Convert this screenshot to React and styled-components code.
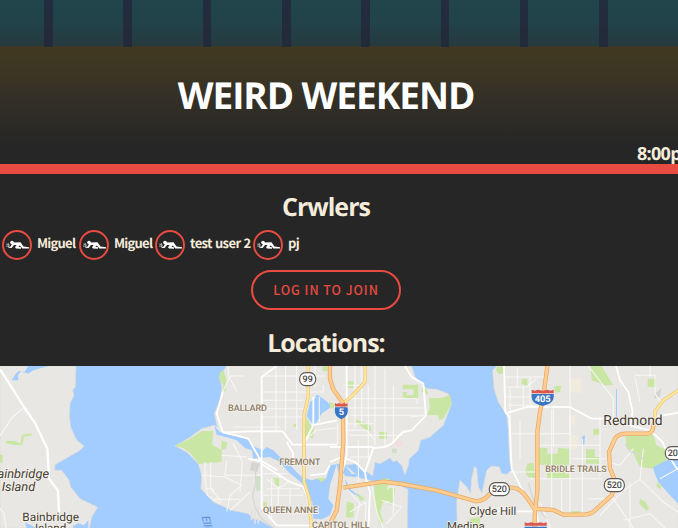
import React from "react";
import styled, { createGlobalStyle } from "styled-components";

const cream = "#f5ecdb";
const red = "#e84b41";
const display = `"Open Sans", "Noto Sans", sans-serif`;
const body = `"Noto Sans CJK SC", "Open Sans", sans-serif`;

const GlobalStyle = createGlobalStyle`
  * { box-sizing: border-box; }
  body { margin: 0; background: #262626; overflow: hidden; }
`;

const Page = styled.div`
  width: 678px;
  height: 528px;
  overflow: hidden;
  display: flex;
  flex-direction: column;
  background: #262626;
  color: ${cream};
  font-family: ${body};
  text-rendering: geometricPrecision;
`;

const Hero = styled.header`
  height: 174px;
  flex: none;
  border-bottom: 10px solid ${red};
  display: flex;
  flex-direction: column;
  overflow: hidden;
  background: linear-gradient(#413821 46px, #403822 58px, #353126 94px, #262626 146px);
`;

const Facade = styled.div`
  height: 46px;
  flex: none;
  display: flex;
  gap: 70.8px;
  padding-left: 44.2px;
  background: linear-gradient(#20454a, #21434a 45%, #253a3f);
`;

const Pillar = styled.div`
  flex: none;
  width: 8.5px;
  height: 47px;
  background: linear-gradient(#232d41, #232a38);
`;

const Title = styled.h1`
  margin: 0;
  width: 652px;
  height: 99px;
  text-align: center;
  white-space: nowrap;
  color: #fff;
  font: 700 37px/98px ${display};
  letter-spacing: -1.05px;
`;

const Time = styled.div`
  flex: none;
  height: 20px;
  padding-left: 637px;
  white-space: nowrap;
  font: 700 18px/20px ${display};
  letter-spacing: -0.7px;
`;

const Content = styled.main`
  width: 652px;
  height: 192px;
  flex: none;
  display: flex;
  flex-direction: column;
  align-items: center;
`;

const Heading = styled.h2`
  margin: 17px 0 0;
  height: 32px;
  font: 700 25px/32px ${display};
  letter-spacing: -1px;
`;

const Crawlers = styled.div`
  align-self: stretch;
  display: flex;
  height: 30px;
  margin-top: 7px;
  padding-left: 2px;
`;

const Crawler = styled.div`
  display: flex;
  flex: none;
  width: ${(p) => p.$width}px;
  white-space: nowrap;
  font-size: 13px;
  line-height: 26px;
  font-weight: 700;
  letter-spacing: ${(p) => p.$tracking}px;
  word-spacing: 0.6px;
`;

const Avatar = styled.span`
  width: 30px;
  height: 30px;
  flex: none;
  margin-right: 5px;
  border: 2px solid ${red};
  border-radius: 50%;
`;

const JoinButton = styled.button`
  margin-top: 10px;
  width: 150px;
  height: 40px;
  flex: none;
  padding: 0;
  border: 2px solid ${red};
  border-radius: 20px;
  background: transparent;
  color: ${red};
  font: 500 12.5px/36px ${body};
  letter-spacing: 0.95px;
`;

const MapCanvas = styled.svg`
  display: block;
  flex: none;
  width: 678px;
  height: 162px;
  font-family: Roboto, sans-serif;
`;

const Outlined = styled.text`
  font-size: ${(p) => p.$size}px;
  font-weight: ${(p) => p.$weight || 400};
  font-style: ${(p) => (p.$italic ? "italic" : "normal")};
  fill: ${(p) => p.$color || "#463d30"};
  stroke: #f5f3ef;
  stroke-width: 5px;
  stroke-linejoin: round;
  paint-order: stroke;
`;

const crawlers = [
  { name: "Miguel", width: 77, tracking: -0.75 },
  { name: "Miguel", width: 76, tracking: -0.75 },
  { name: "test user 2", width: 98, tracking: -0.6 },
  { name: "pj", width: 50, tracking: -0.5 },
];

function CrawlIcon() {
  return (
    <svg width="26" height="26" viewBox="0 0 26 26" display="block">
      <circle cx="8" cy="10.6" r="1.8" fill="#fff" />
      <path d="M9 10.4 L16.5 10.2 L19.5 14.6 L25 15.3 L25 16.6 L18.4 16.4 L15.8 13.6 L14.3 14.8 L17 15.3 L17 16.7 L12 16.5 L11 15.2 L12.6 12.9 L10 13 L7.6 16 L4.4 15.8 L4.4 15 L6.6 14.5 L7.9 12.2 Z" fill="#fff" />
      <path d="M2.3 12 L5.2 13 L4.3 15 M2 14.1 H5 M4 11 L5 13" fill="none" stroke="#bbb" strokeWidth=".9" />
    </svg>
  );
}

// Map drawing units are a third of a pixel.
const minorRoads = [
  "M0 440 L12 455 18 498 M70 138 L35 168 0 222",
  "M685 12 V40 L710 87 M735 42 H690 L668 90 M615 300 V350 L622 400 660 425 M632 300 V380 L665 420 M615 380 L635 380 645 395",
  "M828 12 V205 M857 12 V205 M890 12 V205 M785 42 H975 M785 90 H970 M785 115 H910 M785 140 H910 M785 165 H910 M700 195 H840",
  "M945 12 V75 M958 105 V180 M970 70 V95 M1013 185 V245 M910 240 L948 205 1010 198",
  "M700 245 L727 300 720 390 M680 298 L675 340 H785 M665 280 L740 285 M605 340 L675 345 725 370 L690 400 L680 448 M645 412 H720 M690 445 L750 390",
  "M790 335 H865 M800 350 L835 380 865 360 M800 380 H900 M815 350 V470 M835 375 V450 M870 380 V430 M790 400 H910 M840 335 V375",
  "M1065 12 V200 M1085 15 V185 M1105 70 V290 M1125 12 V250 M1155 20 V255 M1180 70 V240 M1030 70 H1090 M1040 110 H1250 M1040 138 H1270 M1050 160 H1278 M1045 185 H1120 M1050 220 H1210 M1050 285 H1110 M1075 235 V360",
  "M1036 205 H1100 L1125 235 M1230 165 L1278 160 M1252 110 V125 M1040 380 L1080 425 1060 498 M1050 450 L1098 420 1095 498 M1115 360 L1130 450 1150 498 M1180 375 V465 M1145 415 L1205 435 1160 485",
  "M1515 45 H1640 M1520 75 H1580 L1610 50 M1515 105 H1650 M1525 130 H1630 M1530 75 V210 M1552 20 V75 M1570 70 V145 M1590 45 V130 M1640 12 V140 M1710 12 V220 M1660 140 V255",
  "M1530 215 H1715 M1560 175 V290 M1615 250 H1800 M1655 140 V445 M1710 160 V455 M1747 230 V450 M1765 12 L1840 110 V165 M1800 165 V345 M1590 350 H1805 M1530 330 L1605 330 M1715 290 H1820 M1685 350 V455",
  "M1905 40 H1965 V95 L1985 125 M1905 45 L1920 120 M1950 12 V45 M1800 460 L1870 385 1920 352 L1930 260 M1920 352 L1990 420 2034 450 M1765 410 L1840 410 1900 498 M1870 475 L1950 455 1995 498 M1890 360 V498 M1535 440 H1470 M1620 420 L1650 498 M1900 260 L1860 310 1820 300 M1980 350 L2034 320",
];

const majorRoads = [
  "M830 12 L785 45 V438 M668 90 L650 155 668 210 L715 222 745 230 790 310 L870 360 910 375 925 410 935 498 M668 212 L745 208 H848 L878 248 H1012",
  "M1040 12 V280 L1027 330 M940 105 V190 L910 248 M935 190 L1012 175 M1215 12 L1235 45 1270 65 1278 160 L1235 205 1208 210 1175 245 1155 255 1120 258 1095 330 1098 350 1110 390 1105 498 M990 255 H1120",
  "M745 290 L790 300 L832 325 M860 240 L880 275 875 300 M785 438 L830 490 H930",
  "M990 300 L1025 285 1065 300 1095 330 M930 340 L975 335 990 310",
  "M1512 12 L1516 150 1528 165 1535 320 1565 380 1605 440 M1516 155 L1580 135 H1710 L1775 170 H1850 M1605 440 L1620 498",
  "M1848 12 L1860 55 1885 90 1898 150 1890 190 1950 205 1988 240 2005 280 2034 325 M1965 165 L2034 152 M1605 448 H1470",
];

const highways = [
  "M990 12 V50 L1000 82 1028 122 1030 240 1020 370 1010 445 990 485 970 505",
  "M1030 377 L1090 368 1150 359 1205 366 1310 385 1425 417 Q1450 420 1470 395 L1490 377 H1535 C1565 378 1580 405 1603 440 L1660 444 1690 458 H1750 Q1770 458 1785 445 L1835 400 1847 360 1830 320 1827 270 1845 230 Q1855 215 1880 215 H1940 Q1960 215 1960 190 L1965 170",
  "M1642 12 L1632 90 1620 150 1612 210 1612 390 1605 445 1603 498",
];

const yellowHighways = [
  "M925 12 V100 L912 160 V358 L928 410 934 498",
  "M1096 12 L1095 60 1060 98 1032 122",
  "M1965 170 L1965 148 1990 115 2034 85",
];

function RouteShield({ x, y, children, wide }) {
  const w = wide ? 60 : 48;
  return (
    <g>
      <rect x={x - w / 2} y={y - 19} width={w} height="39" rx="18" fill="#fff" stroke="#5c5a56" strokeWidth="3.5" />
      <text x={x} y={y + 9} textAnchor="middle" fontSize="27" fill="#33312e" stroke="#33312e" strokeWidth=".4">{children}</text>
    </g>
  );
}

function Interstate({ x, y, children, w }) {
  const h = w / 2;
  return (
    <g transform={`translate(${x} ${y})`}>
      <path d={`M${-h} -12 H${h} Q${h + 3} 8 ${h * 0.6} 17 Q${h * 0.25} 21 0 24 Q${-h * 0.25} 21 ${-h * 0.6} 17 Q${-h - 3} 8 ${-h} -12 Z`} fill="#3975c5" />
      <path d={`M${-h} -14.5 V-25 L${-h * 0.7} -22 L${-h * 0.45} -25 L0 -22 L${h * 0.45} -25 L${h * 0.7} -22 L${h} -25 V-14.5 Z`} fill="#d95752" />
      <text y="12" textAnchor="middle" fontSize="28" fontWeight="700" fill="#fff">{children}</text>
    </g>
  );
}

function SeattleMap() {
  return (
    <MapCanvas viewBox="0 12 2034 486" preserveAspectRatio="none">
      <rect y="12" width="2034" height="486" fill="#a3ccff" />
      <g fill="#e9e7e4" stroke="#dddcda" strokeWidth="2">
        <path d="M0 12 H228 L226 75 218 85 222 100 210 125 208 160 212 195 230 235 252 252 240 265 165 308 164 325 185 325 207 355 212 375 240 410 293 436 275 465 268 498 H0Z" />
        <path d="M680 12 L658 45 666 75 662 110 643 155 652 195 642 190 605 200 570 226 525 252 560 270 595 305 605 340 603 380 640 420 695 445 745 455 760 470 780 475 805 490 830 500 H1222 V460 L1224 382 1195 368 1130 360 1080 348 1036 310 1068 305 1095 325 1118 342 1125 300 1140 305 1170 288 1180 300 1190 295 1205 310 1215 338 1225 310 1228 290 1255 265 1262 235 1290 225 1330 190 1355 125 1345 95 1310 82 1280 80 1245 45 1235 12Z" />
        <path d="M1490 12 L1478 25 1482 80 1495 120 1520 160 1525 200 1528 290 1535 325 1520 337 1505 335 1498 315 1475 312 1460 325 1446 392 1435 375 1430 320 1423 313 1415 350 1412 395 1400 375 1380 355 1370 420 1372 500 H2034 V12Z" />
      </g>
      <g fill="#cae6a4">
        <path d="M18 237 H45 L62 245 65 218 95 214 94 221 72 224 68 248 48 250 18 244Z M0 278 H8 V302 H0Z" />
        <path d="M525 252 L575 227 605 207 640 207 637 248 665 265 V300 L597 306 570 272 550 258Z M660 32 L670 25 680 55 677 88 667 88 670 70 657 50Z M665 235 L682 243 677 260 664 265Z" />
        <path d="M919 165 L932 190 942 193 939 228 914 226Z M820 348 H842 V373 L828 370Z M790 420 H800 V436 H790Z M968 12 H983 V28 H968Z M988 120 L1005 125 1000 140 985 138Z M950 347 L978 348 968 362 955 362Z M880 185 H888 V195 H880Z" />
        <path d="M1043 58 H1060 V78 H1043Z M1068 172 L1095 182 1110 190 1114 208 1098 205 1068 180Z M1137 210 H1161 V230 H1137Z M1287 108 L1325 108 1350 98 1355 125 1330 170 1317 175 1315 160 1280 158 1290 140Z M1208 68 H1255 V108 L1225 110 1208 105 V90 H1220 V100 H1240 V82 H1208Z M1265 78 L1280 80 1285 98 1265 90Z" />
        <path d="M1123 365 L1148 350 1170 350 1167 365 1160 380 1175 390 1178 412 1150 420 1140 450 1150 480 1140 488 1130 450 1122 405Z M1167 378 L1185 378 1180 425 1166 428Z M1040 418 L1062 425 1060 466 1038 467Z M1068 390 L1095 410 1082 418Z" />
        <path d="M1490 15 L1513 13 1510 35 1495 35 1488 25Z M1565 50 H1582 V72 L1565 66Z M1662 72 L1685 72 1680 90 1665 92Z M1772 12 H1805 L1840 70 1815 70 1775 55Z M1943 50 H1968 V75 H1943Z M1780 200 H1800 V217 L1780 220Z" />
        <path d="M1618 258 H1642 V275 H1672 L1675 258 1708 260 1710 350 H1641 V308 H1618Z M1582 305 L1600 302 1607 350 1585 345 1575 330Z M1758 262 H1785 V285 H1798 V305 H1758Z M1875 215 L1960 218 1970 250 1995 262 2000 295 1960 320 1920 315 1895 265 1880 260Z M1710 448 H1743 L1735 462 1710 460Z M1920 410 L1937 420 1947 440 1940 447 1918 425Z M1970 360 L1985 372 1982 382 1970 375Z M1408 470 L1440 465 V490 H1410Z" />
      </g>
      <g fill="#f0ebdd"><path d="M1710 50 L1745 50 1743 95 1710 90Z M1710 215 L1735 225 1730 260 1710 260Z M1715 160 H1725 V190 H1710Z M1695 310 H1710 V335 H1695Z" /></g>
      <path d="M1190 235 L1200 230 1210 245 1195 255 1185 252Z" fill="#f3dddf" />
      <path d="M1176 260 H1190 V273 H1176Z M768 342 H782 V386 H768Z" fill="#cfe0c8" />
      <path d="M755 300 L780 305 772 330 750 325Z M1965 95 L1985 78 1980 105 1962 110Z" fill="#d5d4d1" />
      <g fill="#a3ccff">
        <path d="M35 55 L50 32 58 26 72 32 85 12 H145 L100 25 85 35 63 28 54 38 55 55Z M75 482 L90 488 110 498 H80Z M220 492 L235 484 252 490 265 475 V498 H220Z" />
        <path d="M643 192 L660 210 690 220 720 222 745 235 765 255 790 265 800 255 820 265 840 285 870 300 875 315 905 345 935 355 950 350 965 360 978 350 990 310 1010 307 1000 340 990 370 985 410 1000 430 990 460 965 472 940 470 937 420 922 400 920 375 890 350 865 330 840 300 810 285 760 290 756 265 735 258 710 235 680 226 650 218Z" />
        <path d="M930 120 L945 110 950 97 970 110 988 125 990 137 965 155 948 185 935 183 920 163Z" />
        <path d="M1010 305 L1035 310 1055 335 1085 340 1065 345 1035 342 1030 332 1018 345Z M1035 350 L1050 380 1080 405 1060 395 1040 380Z" />
        <path d="M1745 225 L1755 220 1753 250 1745 245Z M1848 82 H1851 V165 H1848Z M1960 315 L2000 295 2034 285 V425 L2010 400 1975 360 1962 330Z" />
      </g>
      <g stroke="#e4e2df" strokeWidth="5"><path d="M755 438 V475 M765 435 V485 M775 435 V485" /></g>
      <g fill="none" stroke="#f7f7f5" strokeWidth="3.2" strokeLinejoin="round">
        {minorRoads.map((d) => <path key={d} d={d} />)}
      </g>
      <path d="M765 310 L768 360 758 400 765 435 785 470 820 498 M1585 362 L1605 430 1640 470 M1875 245 L1890 268 1910 275 1930 292" fill="none" stroke="#d8d7d4" strokeWidth="4" />
      <g fill="none" stroke="#fff" strokeWidth="5.5" strokeLinejoin="round">
        {majorRoads.map((d) => <path key={d} d={d} />)}
        <path d="M0 22 L28 65 72 135 105 183 142 260 147 350 174 386 177 450" strokeWidth="7" />
      </g>
      <g fill="none" strokeLinejoin="round">
        {yellowHighways.map((d) => <path key={d} d={d} stroke="#e8c575" strokeWidth="10" />)}
        {yellowHighways.map((d) => <path key={d + "i"} d={d} stroke="#ffe69a" strokeWidth="6.5" />)}
        {highways.map((d) => <path key={d} d={d} stroke="#e8a962" strokeWidth="13" />)}
        {highways.map((d) => <path key={d + "i"} d={d} stroke="#ffcd90" strokeWidth="8.5" />)}
      </g>
      <RouteShield x={923} y={51}>99</RouteShield>
      <RouteShield x={1498} y={381} wide>520</RouteShield>
      <RouteShield x={1843} y={369} wide>520</RouteShield>
      <RouteShield x={2026} y={273} wide>202</RouteShield>
      <Interstate x={1024} y={148} w={38}>5</Interstate>
      <Interstate x={1628} y={108} w={66}>405</Interstate>
      <Interstate x={1607} y={506} w={66}>405</Interstate>
      <Outlined x="-31" y="348" $size={38} $italic textLength="178" lengthAdjust="spacingAndGlyphs">Bainbridge</Outlined>
      <Outlined x="5" y="388" $size={38} $italic textLength="101" lengthAdjust="spacingAndGlyphs">Island</Outlined>
      <Outlined x="67" y="477" $size={35} textLength="170" lengthAdjust="spacingAndGlyphs">Bainbridge</Outlined>
      <Outlined x="105" y="511" $size={35} textLength="94" lengthAdjust="spacingAndGlyphs">Island</Outlined>
      <Outlined x="684" y="147" $size={27} $weight={500} $color="#8c7962" textLength="117" lengthAdjust="spacingAndGlyphs">BALLARD</Outlined>
      <Outlined x="838" y="309" $size={27} $weight={500} $color="#8c7962" textLength="123" lengthAdjust="spacingAndGlyphs">FREMONT</Outlined>
      <Outlined x="789" y="454" $size={27} $weight={500} $color="#8c7962" textLength="165" lengthAdjust="spacingAndGlyphs">QUEEN ANNE</Outlined>
      <Outlined x="936" y="498" $size={27} $weight={500} $color="#8c7962" textLength="173" lengthAdjust="spacingAndGlyphs">CAPITOL HILL</Outlined>
      <Outlined x="1636" y="330" $size={27} $weight={500} $color="#8c7962" textLength="184" lengthAdjust="spacingAndGlyphs">BRIDLE TRAILS</Outlined>
      <Outlined x="1810" y="189" $size={42} textLength="178" lengthAdjust="spacingAndGlyphs">Redmond</Outlined>
      <Outlined x="1408" y="459" $size={34} textLength="141" lengthAdjust="spacingAndGlyphs">Clyde Hill</Outlined>
      <Outlined x="1341" y="504" $size={34} textLength="113" lengthAdjust="spacingAndGlyphs">Medina</Outlined>
      <text transform="translate(605 464) rotate(78)" fontSize="33" fontStyle="italic" fill="#5e91d3">Elliott Bay</text>
    </MapCanvas>
  );
}

export default function App() {
  return (
    <Page>
      <GlobalStyle />
      <Hero>
        <Facade>
          {Array.from({ length: 8 }, (_, i) => <Pillar key={i} />)}
        </Facade>
        <Title>WEIRD WEEKEND</Title>
        <Time>8:00pm</Time>
      </Hero>
      <Content>
        <Heading>Crwlers</Heading>
        <Crawlers>
          {crawlers.map((c, i) => (
            <Crawler key={i} $width={c.width} $tracking={c.tracking}>
              <Avatar><CrawlIcon /></Avatar>
              {c.name}
            </Crawler>
          ))}
        </Crawlers>
        <JoinButton>LOG IN TO JOIN</JoinButton>
        <Heading>Locations:</Heading>
      </Content>
      <SeattleMap />
    </Page>
  );
}
